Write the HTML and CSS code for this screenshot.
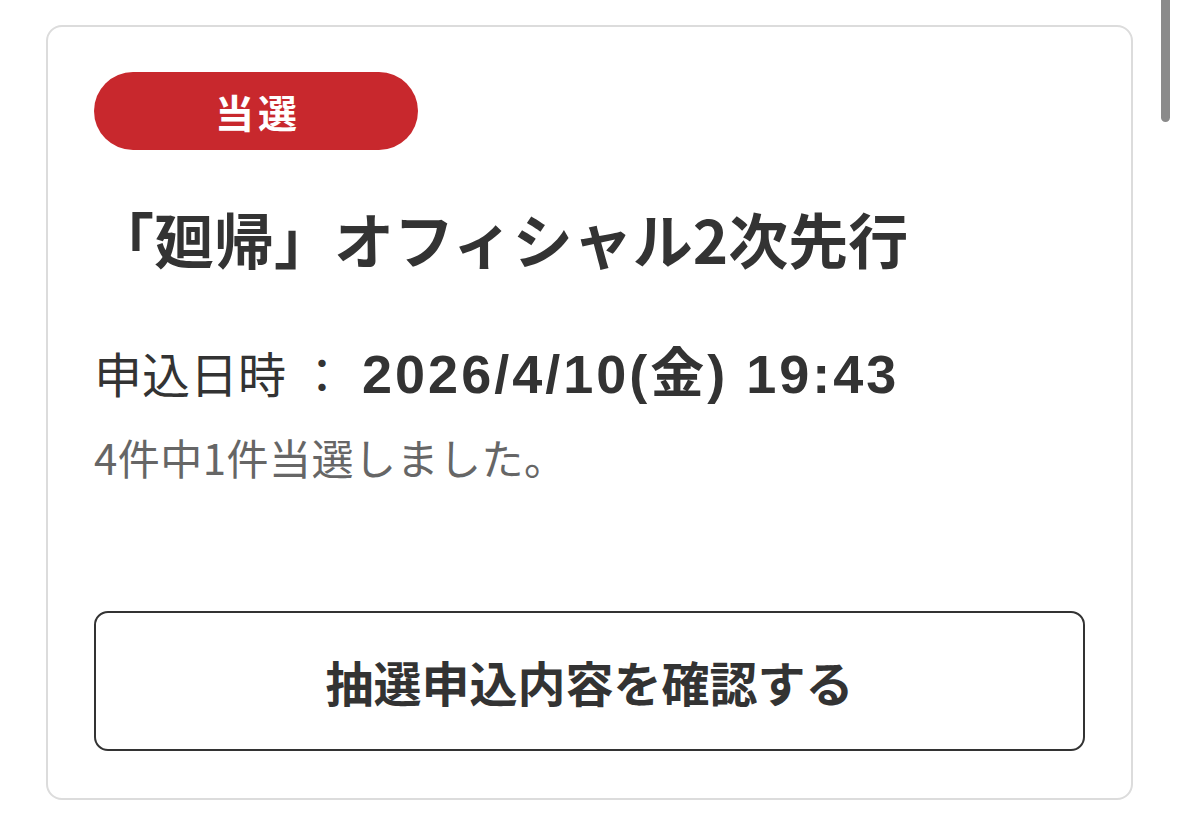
FILE: index.html
```html
<!DOCTYPE html>
<html lang="ja">
<head>
<meta charset="utf-8">
<link rel="stylesheet" href="styles.css">
</head>
<body>
<div class="page">
  <div class="card">
    <div class="badge">当選</div>
    <h1 class="title">「廻帰」オフィシャル2次先行</h1>
    <div class="date-row">
      <span class="date-label">申込日時</span>
      <span class="date-colon">：</span>
      <span class="date-value">2026/4/10(金) 19:43</span>
    </div>
    <p class="result">4件中1件当選しました。</p>
    <div class="button">抽選申込内容を確認する</div>
  </div>
  <div class="scrollbar"></div>
</div>
</body>
</html>
```
FILE: styles.css
```css
html, body {
  margin: 0;
  padding: 0;
  background: #ffffff;
}
body {
  font-family: "Liberation Sans", "Noto Sans CJK JP", sans-serif;
  color: #333333;
}
.page {
  position: relative;
  width: 1179px;
  height: 822px;
  overflow: hidden;
  padding: 25px 0 0 46px;
  box-sizing: border-box;
}
.card {
  width: 1087px;
  height: 775px;
  box-sizing: border-box;
  border: 2px solid #dcdcdc;
  border-radius: 16px;
  padding: 45px 46px 0 46px;
  display: flex;
  flex-direction: column;
}
.badge {
  width: 324px;
  height: 78px;
  border-radius: 39px;
  background: #c8282d;
  color: #ffffff;
  font-family: "Noto Sans CJK JP", sans-serif;
  font-weight: 700;
  font-size: 39px;
  line-height: 1;
  display: flex;
  align-items: center;
  justify-content: center;
  letter-spacing: 4px;
  padding-left: 4px;
  box-sizing: border-box;
}
.title {
  margin: 52px 0 0 0;
  font-family: "Noto Sans CJK JP", sans-serif;
  font-size: 60px;
  font-weight: 700;
  line-height: 72px;
  color: #333333;
}
.date-row {
  margin-top: 66px;
  display: flex;
  align-items: baseline;
  line-height: 64px;
  height: 64px;
}
.date-label {
  font-family: "Noto Sans CJK JP", sans-serif;
  font-weight: 400;
  font-size: 48px;
}
.date-colon {
  font-family: "Noto Sans CJK JP", sans-serif;
  font-size: 48px;
  margin: 0 16px 0 12px;
}
.date-value {
  font-weight: 700;
  font-size: 54px;
  letter-spacing: 3px;
}
.result {
  margin: 28px 0 0 0;
  font-family: "Noto Sans CJK JP", sans-serif;
  font-size: 42px;
  line-height: 50px;
  letter-spacing: 0.5px;
  color: #666666;
}
.button {
  margin-top: auto;
  margin-bottom: 47px;
  height: 140px;
  box-sizing: border-box;
  border: 2.5px solid #333333;
  border-radius: 14px;
  display: flex;
  align-items: center;
  justify-content: center;
  font-family: "Noto Sans CJK JP", sans-serif;
  font-weight: 700;
  font-size: 48px;
  color: #333333;
}
.scrollbar {
  position: absolute;
  top: 0;
  left: 1161px;
  width: 9px;
  height: 122px;
  background: #8a8a8a;
  border-radius: 0 0 5px 5px;
}
```
